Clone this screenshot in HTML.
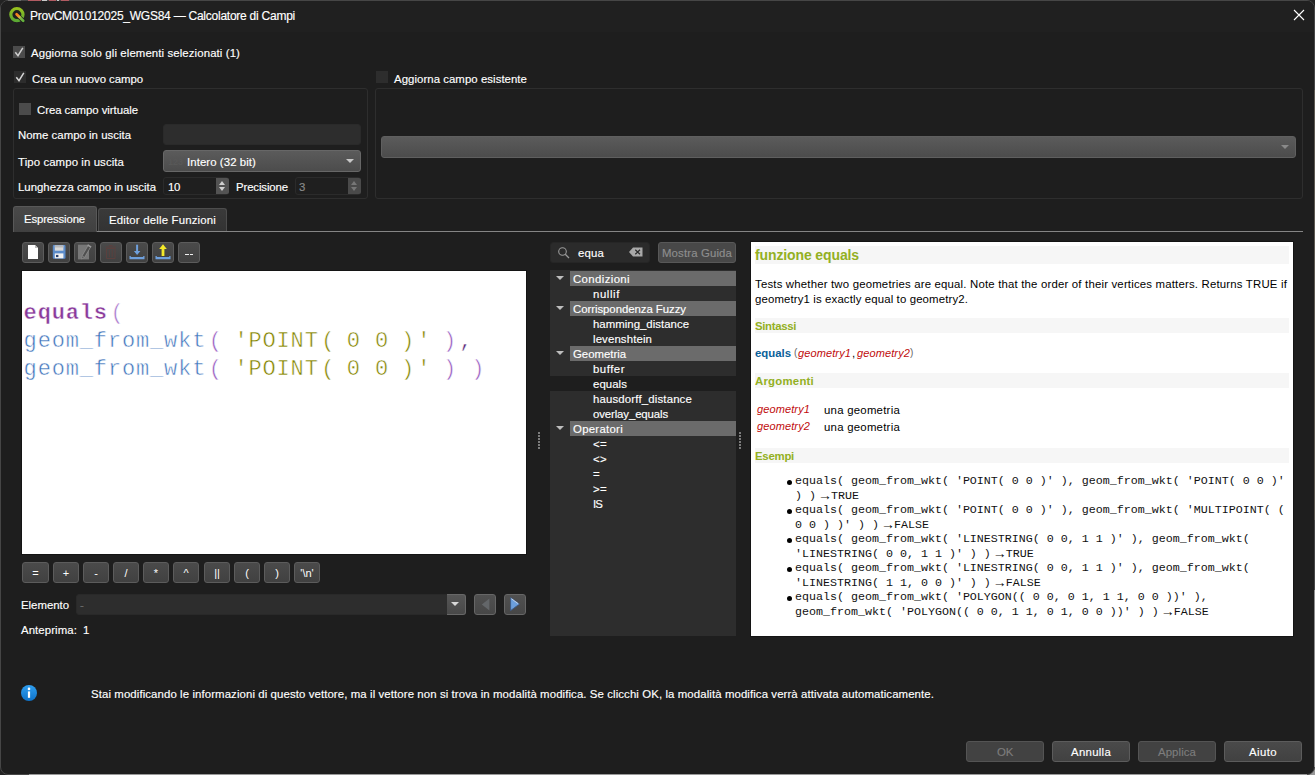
<!DOCTYPE html>
<html>
<head>
<meta charset="utf-8">
<title>Calcolatore di Campi</title>
<style>
html,body{margin:0;padding:0;background:#232323;}
#edge div{z-index:5}
body{width:1315px;height:775px;overflow:hidden;position:relative;font-family:"Liberation Sans",sans-serif;font-size:12px;color:#fff;}
#win{position:absolute;left:0;top:0;width:1313px;height:773px;background:#1e1e1e;border:1px solid #464646;border-radius:8px;overflow:hidden;}
#titlebar{position:absolute;left:0;top:0;width:1313px;height:31px;background:#202020;}
.abs{position:absolute;}
.t{position:absolute;white-space:nowrap;line-height:14px;height:14px;color:#fff;font-size:11.4px;-webkit-text-stroke:0.15px;}
.cb{position:absolute;width:12px;height:12px;background:#4b4b4b;}
.gb{position:absolute;border:1px solid #2e2e2e;border-radius:3px;box-sizing:border-box;}
.inp{position:absolute;background:#2d2d2d;border:1px solid #2a2a2a;border-radius:3px;box-sizing:border-box;}
.combo{position:absolute;background:linear-gradient(#5b5b5b,#4c4c4c);border:1px solid #676767;border-radius:3px;box-sizing:border-box;}
.btn{position:absolute;background:linear-gradient(#4a4a4a,#414141);border:1px solid #5c5c5c;border-radius:3px;box-sizing:border-box;}
.k{-webkit-text-stroke:0 !important}
.pl{position:relative;left:2.5px}.pr{position:relative;left:-2.2px}
.arr{position:absolute;width:0;height:0;border-left:4px solid transparent;border-right:4px solid transparent;border-top:4px solid #c8c8c8;}
</style>
</head>
<body>
<div class="abs" style="left:1305px;top:765px;width:10px;height:10px;background:#999"></div>
<div id="win">
<div id="titlebar"></div>
<!-- content is positioned relative to #win whose inner origin is at (1,1) of the page -->
<div id="c" class="abs" style="left:-1px;top:-1px;width:1315px;height:775px;">

<!-- SECTION:TITLE -->
<svg class="abs" style="left:8px;top:6px" width="18" height="18" viewBox="0 0 18 18">
  <defs><linearGradient id="qg" x1="0" y1="0" x2="0" y2="1"><stop offset="0" stop-color="#97c11f"/><stop offset="1" stop-color="#5aa832"/></linearGradient>
  <linearGradient id="pg" x1="0" y1="0" x2="1" y2="1"><stop offset="0" stop-color="#f7821a"/><stop offset=".3" stop-color="#f0902a"/><stop offset=".45" stop-color="#c9c14a"/><stop offset=".6" stop-color="#7fb842"/><stop offset="1" stop-color="#62b13c"/></linearGradient></defs>
  <circle cx="8.9" cy="8.6" r="6.1" fill="none" stroke="url(#qg)" stroke-width="3.2"/>
  <path d="M8.2 8 L15.6 15.2" stroke="#1e1e1e" stroke-width="4.2" stroke-linecap="round"/>
  <path d="M8.6 8.3 L15.2 14.8" stroke="url(#pg)" stroke-width="2.7" stroke-linecap="round"/>
</svg>
<span class="t" style="left:30px;top:9px;font-size:12px;--w:265;letter-spacing:-0.243px">ProvCM01012025_WGS84 — Calcolatore di Campi</span>
<svg class="abs" style="left:1292px;top:8px" width="14" height="14" viewBox="0 0 14 14"><path d="M2 2 L12 12 M12 2 L2 12" stroke="#fff" stroke-width="1.1" fill="none"/></svg>
<!-- SECTION:TOP -->
<div class="cb" style="left:13px;top:46px"><svg width="12" height="12" viewBox="0 0 12 12"><path d="M2.3 6.2 L5 9.6 L9.8 1.8" stroke="#cfcfcf" stroke-width="1.5" fill="none"/></svg></div>
<span class="t" style="left:31px;top:46px;--w:209;letter-spacing:0.107px">Aggiorna solo gli elementi selezionati (1)</span>

<div class="cb" style="left:14px;top:71px;background:#2d2d2d"><svg width="12" height="12" viewBox="0 0 12 12"><path d="M2.3 6.2 L5 9.6 L9.8 1.8" stroke="#d6d6d6" stroke-width="1.5" fill="none"/></svg></div>
<span class="t" style="left:32px;top:72px;--w:111;letter-spacing:-0.057px">Crea un nuovo campo</span>
<div class="gb" style="left:13px;top:88px;width:355px;height:111px"></div>

<div class="cb" style="left:19px;top:103px"></div>
<span class="t" style="left:37px;top:103px;--w:101;letter-spacing:-0.049px">Crea campo virtuale</span>

<span class="t" style="left:18px;top:128px;--w:113;letter-spacing:0.015px">Nome campo in uscita</span>
<div class="inp" style="left:163px;top:124px;width:198px;height:21px"></div>

<span class="t" style="left:18px;top:155px;--w:106;letter-spacing:0.098px">Tipo campo in uscita</span>
<div class="combo" style="left:163px;top:150px;width:198px;height:22px"></div>
<span class="t" style="left:168px;top:155px;font-size:9px;font-weight:bold;color:#595959;opacity:.9">123</span>
<span class="t" style="left:187px;top:155px;--w:69;letter-spacing:0.083px">Intero (32 bit)</span>
<div class="arr" style="left:346px;top:159px"></div>

<span class="t" style="left:18px;top:180px;--w:138;letter-spacing:-0.002px">Lunghezza campo in uscita</span>
<div class="inp" style="left:163px;top:177px;width:66px;height:18px;background:#1f1f1f;border-color:#2b2b2b"></div>
<span class="t" style="left:168px;top:180px;--w:12;letter-spacing:-0.336px">10</span>
<div class="abs" style="left:216px;top:178px;width:13px;height:16px;background:#535353;border-radius:0 2px 2px 0"></div>
<div class="arr" style="left:219px;top:181px;border-width:0 3.5px 4px 3.5px;border-color:transparent transparent #cfcfcf transparent;border-style:solid"></div>
<div class="arr" style="left:219px;top:187px;border-width:4px 3.5px 0 3.5px;border-color:#cfcfcf transparent transparent transparent;border-style:solid"></div>

<span class="t" style="left:236px;top:180px;--w:52;letter-spacing:-0.119px">Precisione</span>
<div class="inp" style="left:295px;top:177px;width:66px;height:18px;background:#1f1f1f;border-color:#2b2b2b"></div>
<span class="t" style="left:299px;top:180px;color:#8a8a8a">3</span>
<div class="abs" style="left:348px;top:178px;width:13px;height:16px;background:#4a4a4a;border-radius:0 2px 2px 0"></div>
<div class="arr" style="left:351px;top:181px;border-width:0 3.5px 4px 3.5px;border-color:transparent transparent #777 transparent;border-style:solid"></div>
<div class="arr" style="left:351px;top:187px;border-width:4px 3.5px 0 3.5px;border-color:#777 transparent transparent transparent;border-style:solid"></div>

<div class="cb" style="left:376px;top:71px;background:#2d2d2d"></div>
<span class="t" style="left:394px;top:72px;--w:133;letter-spacing:0.053px">Aggiorna campo esistente</span>
<div class="gb" style="left:375px;top:88px;width:928px;height:111px"></div>
<div class="combo" style="left:381px;top:136px;width:915px;height:22px;border-color:#5f5f5f"></div>
<div class="arr" style="left:1281px;top:145px;border-top-color:#8a8a8a"></div>
<!-- SECTION:TABS -->
<div class="abs" style="left:13px;top:231px;width:1290px;height:1px;background:#858585"></div>
<div class="abs" style="left:13px;top:206px;width:84px;height:26px;background:linear-gradient(#494949,#404040);border:1px solid #585858;border-bottom:none;border-radius:3px 3px 0 0;box-sizing:border-box"></div>
<span class="t" style="left:24px;top:212px;--w:61;letter-spacing:-0.153px">Espressione</span>
<div class="abs" style="left:98px;top:208px;width:129px;height:23px;background:linear-gradient(#3a3a3a,#333);border:1px solid #4d4d4d;border-bottom:none;border-radius:3px 3px 0 0;box-sizing:border-box"></div>
<span class="t" style="left:109px;top:213px;--w:107;letter-spacing:0.180px">Editor delle Funzioni</span>
<!-- SECTION:EDITOR -->
<div class="btn tb" style="left:22px;top:242px;width:22px;height:21px"><svg width="20" height="19" viewBox="0 0 20 19"><path d="M5 2 H12 L15 5 V16 H5 Z" fill="#fff"/><path d="M12 2 V5 H15 Z" fill="#bdbdbd"/></svg></div>
<div class="btn tb" style="left:48px;top:242px;width:22px;height:21px"><svg width="20" height="19" viewBox="0 0 20 19"><rect x="3.8" y="2" width="12.7" height="13.8" rx="1" fill="#5c8cca"/><rect x="5.8" y="2.5" width="8.6" height="5.2" fill="#d9d9d9"/><rect x="5.8" y="2.5" width="8.6" height="2" fill="#b9b9b9"/><rect x="5.8" y="10.4" width="8.6" height="4.9" fill="#f2f2f2"/><rect x="7" y="11.9" width="2.4" height="2.2" fill="#27406e"/></svg></div>
<div class="btn tb" style="left:74px;top:242px;width:22px;height:21px"><svg width="20" height="19" viewBox="0 0 20 19"><rect x="3" y="1.7" width="11" height="14.7" fill="#787878"/><path d="M14.3 3.4 L8.3 13.6" stroke="#8e8e8e" stroke-width="3.6"/><path d="M14.3 3.4 L8.3 13.6" stroke="#4f4f4f" stroke-width="2.2"/><path d="M6.9 12.8 L6.5 16 L9.6 14.4 Z" fill="#5a5a5a" stroke="#8e8e8e" stroke-width=".6"/><path d="M12.6 2 L16.2 4.2" stroke="#9a9a9a" stroke-width="1.5"/></svg></div>
<div class="btn tb" style="left:100px;top:242px;width:22px;height:21px"><svg width="20" height="19" viewBox="0 0 20 19"><path d="M5.5 5.5 H14 V15.5 H5.5 Z M4.5 4 H15 M8 2.6 H11.5 M8.3 7 V14 M11.2 7 V14" stroke="#5b403e" stroke-width="1" fill="none"/></svg></div>
<div class="btn tb" style="left:126px;top:242px;width:22px;height:21px"><svg width="20" height="19" viewBox="0 0 20 19"><rect x="9.1" y="1.7" width="2" height="7.5" fill="#6fa0dd"/><path d="M6.9 8 H13.4 L10.1 12 Z" fill="#6fa0dd"/><path d="M2.5 13 H3.8 V14 H16.2 V13 H17.5 V16.2 H2.5 Z" fill="#6fa0dd"/></svg></div>
<div class="btn tb" style="left:152px;top:242px;width:22px;height:21px"><svg width="20" height="19" viewBox="0 0 20 19"><rect x="8.6" y="4.5" width="2.8" height="8.5" fill="#f4ea2a"/><path d="M6.2 6 L10 1.2 L13.8 6 Z" fill="#f4ea2a"/><path d="M2.5 13 H3.8 V14 H16.2 V13 H17.5 V16.2 H2.5 Z" fill="#6fa0dd"/></svg></div>
<div class="btn tb" style="left:178px;top:242px;width:22px;height:21px"><div style="position:absolute;left:6px;top:11px;width:4px;height:1px;background:#f0f0f0"></div><div style="position:absolute;left:11px;top:11px;width:3px;height:1px;background:#f0f0f0"></div></div>
<div class="abs" style="left:21px;top:270px;width:506px;height:285px;background:#141414"></div><div class="abs" style="left:22px;top:271px;width:504px;height:283px;background:#fff"></div>
<div class="abs mono" style="left:23.6px;top:300px;font-family:'Liberation Mono',monospace;font-size:22px;letter-spacing:0.85px;line-height:28.1px;white-space:pre;color:#000;-webkit-text-stroke:0.5px #fff"><span style="color:#8a3a9b;font-weight:bold;-webkit-text-stroke:0.45px #fff">equals</span><span class="pl" style="color:#a877cc">(</span>
<span style="color:#4175bc">geom_from_wkt</span><span class="pl" style="color:#9a5fc2">(</span> <span style="color:#848400">'POINT<span class="pl">(</span> 0 0 <span class="pr">)</span>'</span> <span class="pr" style="color:#9a5fc2">)</span><span style="color:#5a2a7a">,</span>
<span style="color:#4175bc">geom_from_wkt</span><span class="pl" style="color:#9a5fc2">(</span> <span style="color:#848400">'POINT<span class="pl">(</span> 0 0 <span class="pr">)</span>'</span> <span class="pr" style="color:#9a5fc2">)</span> <span class="pr" style="color:#9a5fc2">)</span></div>
<div class="btn" style="left:22px;top:562px;width:27px;height:21px;text-align:center;line-height:20px;font-size:11px;color:#fff">=</div>
<div class="btn" style="left:53px;top:562px;width:26px;height:21px;text-align:center;line-height:20px;font-size:11px;color:#fff">+</div>
<div class="btn" style="left:83px;top:562px;width:26px;height:21px;text-align:center;line-height:20px;font-size:11px;color:#fff">-</div>
<div class="btn" style="left:113px;top:562px;width:26px;height:21px;text-align:center;line-height:20px;font-size:11px;color:#fff">/</div>
<div class="btn" style="left:143px;top:562px;width:26px;height:21px;text-align:center;line-height:20px;font-size:11px;color:#fff">*</div>
<div class="btn" style="left:173px;top:562px;width:26px;height:21px;text-align:center;line-height:20px;font-size:11px;color:#fff">^</div>
<div class="btn" style="left:204px;top:562px;width:26px;height:21px;text-align:center;line-height:20px;font-size:11px;color:#fff">||</div>
<div class="btn" style="left:234px;top:562px;width:26px;height:21px;text-align:center;line-height:20px;font-size:11px;color:#fff">(</div>
<div class="btn" style="left:264px;top:562px;width:26px;height:21px;text-align:center;line-height:20px;font-size:11px;color:#fff">)</div>
<div class="btn" style="left:294px;top:562px;width:26px;height:21px;text-align:center;line-height:20px;font-size:11px;color:#fff">'\n'</div>
<span class="t" style="left:21px;top:598px;--w:48;letter-spacing:-0.016px">Elemento</span>
<div class="inp" style="left:76px;top:594px;width:390px;height:21px;background:#2d2d2d;border-color:#292929"></div>
<span class="t" style="left:80px;top:598px;color:#6a6a6a">-</span>
<div class="abs" style="left:447px;top:594px;width:19px;height:21px;background:linear-gradient(#565656,#484848);border:1px solid #676767;border-left:none;border-radius:0 3px 3px 0;box-sizing:border-box"></div>
<div class="arr" style="left:451px;top:602px;border-top-width:4.5px;border-top-color:#d8d8d8"></div>
<div class="btn" style="left:474px;top:594px;width:22px;height:21px;background:linear-gradient(#505050,#474747);border-color:#666"><svg width="20" height="19" viewBox="0 0 20 19"><path d="M14.4 3.4 V15.4 L6.8 9.4 Z" fill="#636669"/></svg></div>
<div class="btn" style="left:504px;top:594px;width:22px;height:21px;background:linear-gradient(#505050,#474747);border-color:#666"><svg width="20" height="19" viewBox="0 0 20 19"><path d="M5.6 2.6 V15.6 L14.4 9.1 Z" fill="#6c9fdc" stroke="#3d5b88" stroke-width=".9"/><path d="M6.3 3.6 L13.4 8.8" stroke="#dfe9f6" stroke-width=".8"/></svg></div>
<span class="t" style="left:21px;top:623px;--w:56;letter-spacing:0.091px">Anteprima:</span>
<span class="t" style="left:83px;top:623px">1</span>
<!-- SECTION:TREE -->
<div class="inp" style="left:550px;top:242px;width:100px;height:21px;background:#2b2b2b;border-color:#262626"></div>
<svg class="abs" style="left:556px;top:245px" width="16" height="16" viewBox="0 0 16 16"><circle cx="6.5" cy="6.5" r="3.8" fill="none" stroke="#9a9a9a" stroke-width="1.1"/><path d="M9.3 9.3 L13 13" stroke="#9a9a9a" stroke-width="1.3"/></svg>
<span class="t" style="left:578px;top:246px;--w:26;letter-spacing:0.164px">equa</span>
<svg class="abs" style="left:628px;top:246px" width="16" height="12" viewBox="0 0 16 12"><path d="M1 6 L5 1.5 H14.5 V10.5 H5 Z" fill="#a8a8a8"/><path d="M7.3 3.7 L12 8.3 M12 3.7 L7.3 8.3" stroke="#2b2b2b" stroke-width="1.2"/></svg>
<div class="btn" style="left:658px;top:242px;width:78px;height:21px;background:#484848;border-color:#585858"></div>
<span class="t" style="left:662px;top:246px;color:#8e8e8e;--w:70;letter-spacing:0.135px">Mostra Guida</span>
<div class="abs" style="left:550px;top:270px;width:186px;height:366px;background:#2d2d2d"></div>
<div class="abs" style="left:570px;top:271px;width:166px;height:15px;background:#6b6b6b"></div><div class="arr" style="left:556px;top:276px;border-top-color:#bdbdbd"></div><span class="t" style="left:573px;top:272px;--w:57;letter-spacing:0.380px">Condizioni</span>
<span class="t" style="left:593px;top:287px;--w:27;letter-spacing:0.594px">nullif</span>
<div class="abs" style="left:570px;top:301px;width:166px;height:15px;background:#6b6b6b"></div><div class="arr" style="left:556px;top:306px;border-top-color:#bdbdbd"></div><span class="t" style="left:573px;top:302px;--w:113;letter-spacing:-0.048px">Corrispondenza Fuzzy</span>
<span class="t" style="left:593px;top:317px;--w:96;letter-spacing:0.024px">hamming_distance</span>
<span class="t" style="left:593px;top:332px;--w:59;letter-spacing:0.124px">levenshtein</span>
<div class="abs" style="left:570px;top:346px;width:166px;height:15px;background:#6b6b6b"></div><div class="arr" style="left:556px;top:351px;border-top-color:#bdbdbd"></div><span class="t" style="left:573px;top:347px;--w:53;letter-spacing:-0.021px">Geometria</span>
<span class="t" style="left:593px;top:362px;--w:32;letter-spacing:0.513px">buffer</span>
<div class="abs" style="left:550px;top:376px;width:186px;height:15px;background:#1e1e1e"></div><span class="t" style="left:593px;top:377px;--w:34;letter-spacing:0.070px">equals</span>
<span class="t" style="left:593px;top:392px;--w:99;letter-spacing:0.163px">hausdorff_distance</span>
<span class="t" style="left:593px;top:407px;--w:75;letter-spacing:-0.116px">overlay_equals</span>
<div class="abs" style="left:570px;top:421px;width:166px;height:15px;background:#6b6b6b"></div><div class="arr" style="left:556px;top:426px;border-top-color:#bdbdbd"></div><span class="t" style="left:573px;top:422px;--w:50;letter-spacing:0.280px">Operatori</span>
<span class="t" style="left:593px;top:437px;--w:14;letter-spacing:0.344px">&lt;=</span>
<span class="t" style="left:593px;top:452px;--w:14;letter-spacing:0.344px">&lt;&gt;</span>
<span class="t" style="left:593px;top:467px;--w:7;letter-spacing:0.344px">=</span>
<span class="t" style="left:593px;top:482px;--w:14;letter-spacing:0.344px">&gt;=</span>
<span class="t" style="left:593px;top:497px;--w:9;letter-spacing:-0.883px">IS</span>
<div class="abs" style="left:538px;top:432px;width:2px;height:17px;background:repeating-linear-gradient(#7c7c7c 0 2px,transparent 2px 3px)"></div>
<div class="abs" style="left:739px;top:432px;width:2px;height:17px;background:repeating-linear-gradient(#7c7c7c 0 2px,transparent 2px 3px)"></div>
<!-- SECTION:HELP -->
<div class="abs" style="left:750px;top:241px;width:544px;height:396px;background:#141414"></div><div class="abs" style="left:751px;top:242px;width:542px;height:394px;background:#fff"></div>
<div class="abs" style="left:755px;top:246px;width:534px;height:18px;background:#f6f6f6"></div>
<span class="t k" style="left:755px;top:248px;font-size:14px;font-weight:bold;color:#93b023;--w:104;letter-spacing:-0.120px">funzione equals</span>
<span class="t k" style="left:755px;top:277px;color:#000;--w:532;letter-spacing:0.184px">Tests whether two geometries are equal. Note that the order of their vertices matters. Returns TRUE if</span>
<span class="t k" style="left:755px;top:292px;color:#000;--w:213;letter-spacing:0.133px">geometry1 is exactly equal to geometry2.</span>
<div class="abs" style="left:755px;top:318px;width:534px;height:15px;background:#f6f6f6"></div>
<span class="t k" style="left:755px;top:319px;font-weight:bold;color:#93b023;--w:41;letter-spacing:-0.336px">Sintassi</span>
<span class="t k" style="left:755px;top:346px;font-weight:bold;color:#0a6099;--w:36;letter-spacing:-0.016px">equals</span>
<span class="t k" style="left:794px;top:346px;color:#666;font-size:10px">(</span>
<span class="t k" style="left:798px;top:346px;color:#bf0c0c;font-style:italic;font-size:11px;--w:53;letter-spacing:0.113px">geometry1</span>
<span class="t k" style="left:852px;top:346px;color:#000">,</span>
<span class="t k" style="left:857px;top:346px;color:#bf0c0c;font-style:italic;font-size:11px;--w:53;letter-spacing:0.113px">geometry2</span>
<span class="t k" style="left:910px;top:346px;color:#666;font-size:10px">)</span>
<div class="abs" style="left:755px;top:373px;width:534px;height:15px;background:#f6f6f6"></div>
<span class="t k" style="left:755px;top:374px;font-weight:bold;color:#93b023;--w:59;letter-spacing:0.226px">Argomenti</span>
<span class="t k" style="left:757px;top:402px;color:#bf0c0c;font-style:italic;font-size:11px;--w:53;letter-spacing:0.113px">geometry1</span>
<span class="t k" style="left:824px;top:403px;color:#000;--w:76;letter-spacing:0.244px">una geometria</span>
<span class="t k" style="left:757px;top:419px;color:#bf0c0c;font-style:italic;font-size:11px;--w:53;letter-spacing:0.113px">geometry2</span>
<span class="t k" style="left:824px;top:420px;color:#000;--w:76;letter-spacing:0.244px">una geometria</span>
<div class="abs" style="left:755px;top:448px;width:534px;height:15px;background:#f6f6f6"></div>
<span class="t k" style="left:755px;top:449px;font-weight:bold;color:#93b023;--w:39;letter-spacing:-0.255px">Esempi</span>
<div class="abs" style="left:787px;top:479.6px;width:5px;height:5px;border-radius:50%;background:#000"></div><span class="abs" style="left:795px;top:474.0px;font-family:'Liberation Mono',monospace;font-size:11.67px;line-height:14px;height:14px;white-space:pre;color:#111">equals( geom_from_wkt( 'POINT( 0 0 )' ), geom_from_wkt( 'POINT( 0 0 )'</span>
<span class="abs" style="left:795px;top:488.6px;font-family:'Liberation Mono',monospace;font-size:11.67px;line-height:14px;height:14px;white-space:pre;color:#111">) ) <span style="font-family:'Liberation Sans',sans-serif;font-size:14px;font-weight:bold;letter-spacing:0;margin-left:-5px;margin-right:-1px;line-height:0;position:relative;top:1px">→</span>TRUE</span>
<div class="abs" style="left:787px;top:508.7px;width:5px;height:5px;border-radius:50%;background:#000"></div><span class="abs" style="left:795px;top:503.1px;font-family:'Liberation Mono',monospace;font-size:11.67px;line-height:14px;height:14px;white-space:pre;color:#111">equals( geom_from_wkt( 'POINT( 0 0 )' ), geom_from_wkt( 'MULTIPOINT( (</span>
<span class="abs" style="left:795px;top:517.6px;font-family:'Liberation Mono',monospace;font-size:11.67px;line-height:14px;height:14px;white-space:pre;color:#111">0 0 ) )' ) ) <span style="font-family:'Liberation Sans',sans-serif;font-size:14px;font-weight:bold;letter-spacing:0;margin-left:-5px;margin-right:-1px;line-height:0;position:relative;top:1px">→</span>FALSE</span>
<div class="abs" style="left:787px;top:537.8px;width:5px;height:5px;border-radius:50%;background:#000"></div><span class="abs" style="left:795px;top:532.2px;font-family:'Liberation Mono',monospace;font-size:11.67px;line-height:14px;height:14px;white-space:pre;color:#111">equals( geom_from_wkt( 'LINESTRING( 0 0, 1 1 )' ), geom_from_wkt(</span>
<span class="abs" style="left:795px;top:546.8px;font-family:'Liberation Mono',monospace;font-size:11.67px;line-height:14px;height:14px;white-space:pre;color:#111">'LINESTRING( 0 0, 1 1 )' ) ) <span style="font-family:'Liberation Sans',sans-serif;font-size:14px;font-weight:bold;letter-spacing:0;margin-left:-5px;margin-right:-1px;line-height:0;position:relative;top:1px">→</span>TRUE</span>
<div class="abs" style="left:787px;top:566.9px;width:5px;height:5px;border-radius:50%;background:#000"></div><span class="abs" style="left:795px;top:561.3px;font-family:'Liberation Mono',monospace;font-size:11.67px;line-height:14px;height:14px;white-space:pre;color:#111">equals( geom_from_wkt( 'LINESTRING( 0 0, 1 1 )' ), geom_from_wkt(</span>
<span class="abs" style="left:795px;top:575.9px;font-family:'Liberation Mono',monospace;font-size:11.67px;line-height:14px;height:14px;white-space:pre;color:#111">'LINESTRING( 1 1, 0 0 )' ) ) <span style="font-family:'Liberation Sans',sans-serif;font-size:14px;font-weight:bold;letter-spacing:0;margin-left:-5px;margin-right:-1px;line-height:0;position:relative;top:1px">→</span>FALSE</span>
<div class="abs" style="left:787px;top:596.0px;width:5px;height:5px;border-radius:50%;background:#000"></div><span class="abs" style="left:795px;top:590.4px;font-family:'Liberation Mono',monospace;font-size:11.67px;line-height:14px;height:14px;white-space:pre;color:#111">equals( geom_from_wkt( 'POLYGON(( 0 0, 0 1, 1 1, 0 0 ))' ),</span>
<span class="abs" style="left:795px;top:605.0px;font-family:'Liberation Mono',monospace;font-size:11.67px;line-height:14px;height:14px;white-space:pre;color:#111">geom_from_wkt( 'POLYGON(( 0 0, 1 1, 0 1, 0 0 ))' ) ) <span style="font-family:'Liberation Sans',sans-serif;font-size:14px;font-weight:bold;letter-spacing:0;margin-left:-5px;margin-right:-1px;line-height:0;position:relative;top:1px">→</span>FALSE</span>
<!-- SECTION:BOTTOM -->
<svg class="abs" style="left:20px;top:684px" width="18" height="18" viewBox="0 0 18 18"><defs><linearGradient id="ig" x1="0" y1="0" x2="0" y2="1"><stop offset="0" stop-color="#2f9ff0"/><stop offset="1" stop-color="#0e72c8"/></linearGradient></defs><circle cx="9" cy="9" r="8" fill="url(#ig)"/><rect x="7.9" y="7.4" width="2.2" height="6.4" fill="#fff"/><circle cx="9" cy="4.9" r="1.3" fill="#fff"/></svg>
<span class="t" style="left:91px;top:687px;--w:843;letter-spacing:0.100px">Stai modificando le informazioni di questo vettore, ma il vettore non si trova in modalità modifica. Se clicchi OK, la modalità modifica verrà attivata automaticamente.</span>
<div class="btn" style="left:966px;top:741px;width:78px;height:21px;background:#424242;border-color:#545454"></div>
<span class="t" style="left:997px;top:745px;color:#7d7d7d;--w:16;letter-spacing:-0.234px">OK</span>
<div class="btn" style="left:1052px;top:741px;width:78px;height:21px"></div>
<span class="t" style="left:1071px;top:745px;--w:40;letter-spacing:0.286px">Annulla</span>
<div class="btn" style="left:1138px;top:741px;width:78px;height:21px;background:#424242;border-color:#545454"></div>
<span class="t" style="left:1158px;top:745px;color:#7d7d7d;--w:38;letter-spacing:0.092px">Applica</span>
<div class="btn" style="left:1224px;top:741px;width:78px;height:21px"></div>
<span class="t" style="left:1249px;top:745px;--w:28;letter-spacing:0.406px">Aiuto</span>

</div>
</div>
<div id="edge"><div class="abs" style="left:8px;top:0;width:13px;height:1px;background:#6a6a6a"></div><div class="abs" style="left:29px;top:774px;width:1278px;height:1px;background:#999"></div><div class="abs" style="left:1314px;top:90px;width:1px;height:430px;background:#5d5952"></div><div class="abs" style="left:1314px;top:590px;width:1px;height:177px;background:#8c8c8c"></div><div class="abs" style="left:28px;top:0;width:13px;height:1px;background:#b25b62"></div><div class="abs" style="left:42px;top:0;width:5px;height:1px;background:#c9c9c9"></div><div class="abs" style="left:49px;top:0;width:7px;height:1px;background:#b25b62"></div><div class="abs" style="left:57px;top:0;width:2px;height:1px;background:#c9c9c9"></div><div class="abs" style="left:61px;top:0;width:8px;height:1px;background:#b25b62"></div></div>
</body>
</html>
